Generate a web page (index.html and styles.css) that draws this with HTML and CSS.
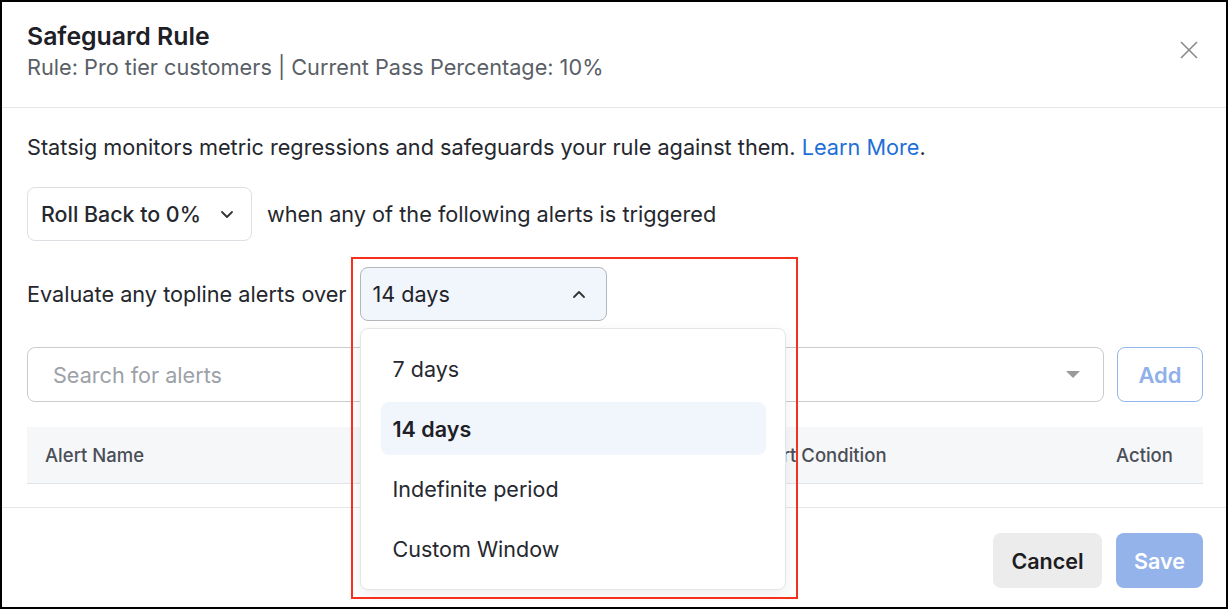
FILE: index.html
```html
<!DOCTYPE html>
<html>
<head>
<meta charset="utf-8">
<link rel="stylesheet" href="styles.css">
</head>
<body>
<div class="frame">
  <header class="header">
    <div class="titles">
      <div class="title">Safeguard Rule</div>
      <div class="subtitle">Rule: Pro tier customers <span class="sep">|</span> Current Pass Percentage: 10%</div>
    </div>
    <button class="close" aria-label="Close">
      <svg width="18" height="18" viewBox="0 0 18 18"><path d="M1 1L17 17M17 1L1 17" stroke="#8a8a8a" stroke-width="1.6" fill="none"/></svg>
    </button>
  </header>

  <main class="body">
    <p class="intro">Statsig monitors metric regressions and safeguards your rule against them. <a class="link">Learn More</a>.</p>

    <div class="row">
      <div class="select rollback">
        <span>Roll Back to 0%</span>
        <svg width="14" height="9" viewBox="0 0 14 9"><path d="M2 2L7 7L12 2" stroke="#333" stroke-width="1.8" fill="none" stroke-linecap="round" stroke-linejoin="round"/></svg>
      </div>
      <span class="row-text">when any of the following alerts is triggered</span>
    </div>

    <div class="row">
      <span class="row-text eval">Evaluate any topline alerts over</span>
      <div class="period-wrap">
        <div class="select period">
          <span>14 days</span>
          <svg width="14" height="9" viewBox="0 0 14 9"><path d="M2 7L7 2L12 7" stroke="#333" stroke-width="1.8" fill="none" stroke-linecap="round" stroke-linejoin="round"/></svg>
        </div>
        <ul class="menu">
          <li class="item">7 days</li>
          <li class="item selected">14 days</li>
          <li class="item">Indefinite period</li>
          <li class="item">Custom Window</li>
        </ul>
      </div>
    </div>

    <div class="search-row">
      <div class="search">
        <span class="placeholder">Search for alerts</span>
        <span class="caret"></span>
      </div>
      <button class="add">Add</button>
    </div>

    <div class="table-head">
      <div class="th">Alert Name</div>
      <div class="th">Alert Condition</div>
      <div class="th">Action</div>
    </div>
  </main>

  <footer class="footer">
    <button class="btn cancel">Cancel</button>
    <button class="btn save">Save</button>
  </footer>

  <div class="highlight"></div>
</div>
</body>
</html>
```

FILE: styles.css
```css
* { box-sizing: border-box; }
html, body { margin: 0; padding: 0; background: #fff; }
body {
  font-family: Inter, "Noto Sans", "Liberation Sans", sans-serif;
  color: #1f2329;
}
.frame {
  position: relative;
  width: 1228px;
  height: 609px;
  border: 2px solid #000;
  overflow: hidden;
  display: flex;
  flex-direction: column;
}
.header {
  height: 106px;
  border-bottom: 1px solid #e6e6e6;
  display: flex;
  justify-content: space-between;
  align-items: flex-start;
  padding: 20px 23px 0 25px;
}
.title {
  font-size: 24.8px;
  line-height: 28px;
  font-weight: 600;
  color: #1d2026;
}
.subtitle {
  margin-top: 4px;
  font-size: 21.7px;
  line-height: 26px;
  color: #5a5f67;
}
.sep { color: #5a5f67; }
.close {
  margin-top: 19px;
  margin-right: 5px;
  background: none;
  border: 0;
  padding: 0;
  width: 18px;
  height: 18px;
  display: flex;
}
.body {
  padding: 26px 23px 0 25px;
  height: 400px;
  border-bottom: 1px solid #e6e6e6;
  display: flex;
  flex-direction: column;
}
.intro {
  margin: 0 0 27px;
  font-size: 21.7px;
  line-height: 26px;
  color: #24272d;
}
.link { color: #1f6fd8; }
.row {
  display: flex;
  align-items: center;
  height: 54px;
  margin-bottom: 26px;
}
.row-text {
  font-size: 21.7px;
  color: #24272d;
}
.select {
  height: 54px;
  border-radius: 8px;
  display: flex;
  align-items: center;
  justify-content: space-between;
  font-size: 21.6px;
}
.rollback {
  width: 225px;
  border: 1px solid #dcdfe4;
  padding: 0 17px 0 13px;
  font-weight: 500;
  font-size: 21.4px;
  color: #25282e;
  margin-right: 15px;
}
.eval { margin-right: 13px; }
.period-wrap { position: relative; }
.period {
  width: 247px;
  background: #f1f5fc;
  border: 1px solid #b3b6bb;
  padding: 0 20px 0 12px;
  color: #1f2329;
}
.menu {
  position: absolute;
  left: 0;
  top: 61px;
  width: 426px;
  margin: 0;
  list-style: none;
  padding: 13px 19px 14px 20px;
  background: #fff;
  border: 1px solid #e4e5e8;
  border-radius: 8px;
  box-shadow: 0 4px 14px rgba(0,0,0,0.07);
  display: flex;
  flex-direction: column;
  gap: 7px;
  z-index: 2;
}
.item {
  height: 53px;
  border-radius: 8px;
  display: flex;
  align-items: center;
  padding-left: 12px;
  font-size: 21.5px;
  color: #25282e;
}
.item.selected {
  background: #f1f5fc;
  font-weight: 600;
  color: #1d2026;
}
.search-row {
  display: flex;
  gap: 13px;
  height: 55px;
  margin-bottom: 25px;
}
.search {
  flex: 1;
  border: 1px solid #c9cbcf;
  border-radius: 8px;
  display: flex;
  align-items: center;
  justify-content: space-between;
  padding: 0 23px 0 25px;
}
.placeholder {
  font-size: 21.6px;
  color: #9ca1a8;
}
.caret {
  width: 0;
  height: 0;
  border-left: 7px solid transparent;
  border-right: 7px solid transparent;
  border-top: 7px solid #9a9a9a;
}
.add {
  width: 86px;
  background: #fff;
  border: 1.5px solid #94b6ee;
  border-radius: 8px;
  font-family: inherit;
  font-size: 22px;
  font-weight: 600;
  color: #8fb0ea;
}
.table-head {
  display: grid;
  grid-template-columns: 709px 362px 1fr;
  height: 57px;
  background: #f6f7f9;
  border-bottom: 1px solid #e3e4e7;
  align-items: center;
}
.th {
  padding-left: 18px;
  font-size: 18.5px;
  font-weight: 500;
  color: #4a4e56;
}
.footer {
  flex: 1;
  display: flex;
  justify-content: flex-end;
  align-items: flex-start;
  gap: 14px;
  padding: 25px 23px 0 0;
}
.btn {
  height: 55px;
  border: 0;
  border-radius: 8px;
  font-family: inherit;
  font-size: 21.5px;
  font-weight: 600;
}
.cancel {
  width: 109px;
  background: #ececec;
  color: #1d1d1f;
}
.save {
  width: 87px;
  background: #93b3ea;
  color: #fff;
}
.highlight {
  position: absolute;
  left: 349px;
  top: 255px;
  width: 447px;
  height: 342px;
  border: 2px solid #f5301d;
  pointer-events: none;
  z-index: 3;
}
```
